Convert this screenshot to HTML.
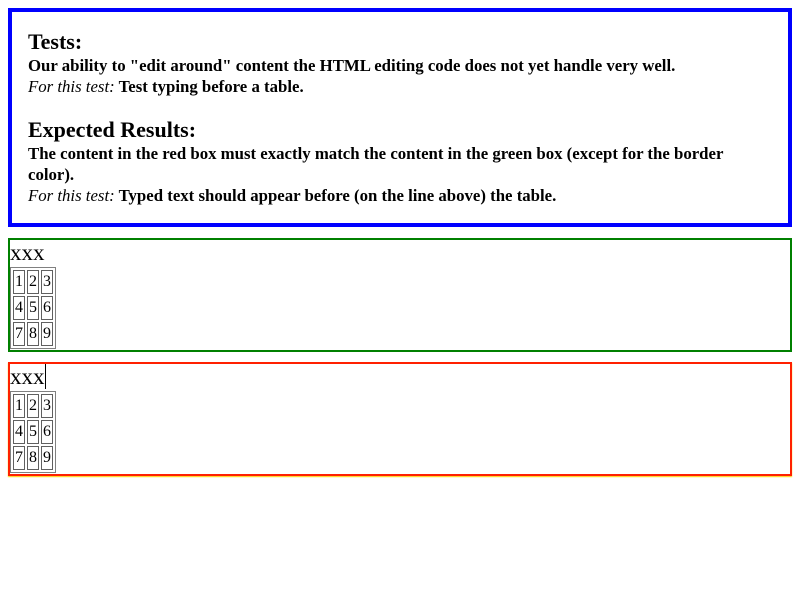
<!DOCTYPE html>
<html><head><style>
body{margin:8px;font-family:"Liberation Serif",serif;background:#fff;color:#000}
.blue{border:4px solid #0000ff;height:219px;box-sizing:border-box;padding:17px 16px 0 16px;}
h2{font-size:22px;margin:0;line-height:26px;font-weight:bold}
p{margin:0;font-size:16.8px;line-height:21px;font-weight:bold}
i{font-weight:normal}
.gap{height:20px}
.box{border:2px solid;height:114px;box-sizing:border-box;margin-top:11px;font-size:23px}
.g{border-color:#008000}
.r{border-color:#ff2000;box-shadow:0 1px 1px #ffcc00}
.x{line-height:26px;height:27px}
table{border:1px solid #808080;border-spacing:2px;margin-left:0;font-size:16px}
td{border:1px solid #606060;padding:0;line-height:22px;width:10px;text-align:center}
.cur{border-right:1px solid #000}
</style></head><body>
<div class="blue">
<h2>Tests:</h2>
<p>Our ability to "edit around" content the HTML editing code does not yet handle very well.</p>
<p><i>For this test:</i> Test typing before a table.</p>
<div class="gap"></div>
<h2>Expected Results:</h2>
<p>The content in the red box must exactly match the content in the green box (except for the border color).</p>
<p><i>For this test:</i> Typed text should appear before (on the line above) the table.</p>
</div>
<div class="box g"><div class="x">xxx</div><table><tr><td>1</td><td>2</td><td>3</td></tr><tr><td>4</td><td>5</td><td>6</td></tr><tr><td>7</td><td>8</td><td>9</td></tr></table></div>
<div class="box r" style="margin-top:10px"><div class="x"><span class="cur">xxx</span></div><table><tr><td>1</td><td>2</td><td>3</td></tr><tr><td>4</td><td>5</td><td>6</td></tr><tr><td>7</td><td>8</td><td>9</td></tr></table></div>
</body></html>
